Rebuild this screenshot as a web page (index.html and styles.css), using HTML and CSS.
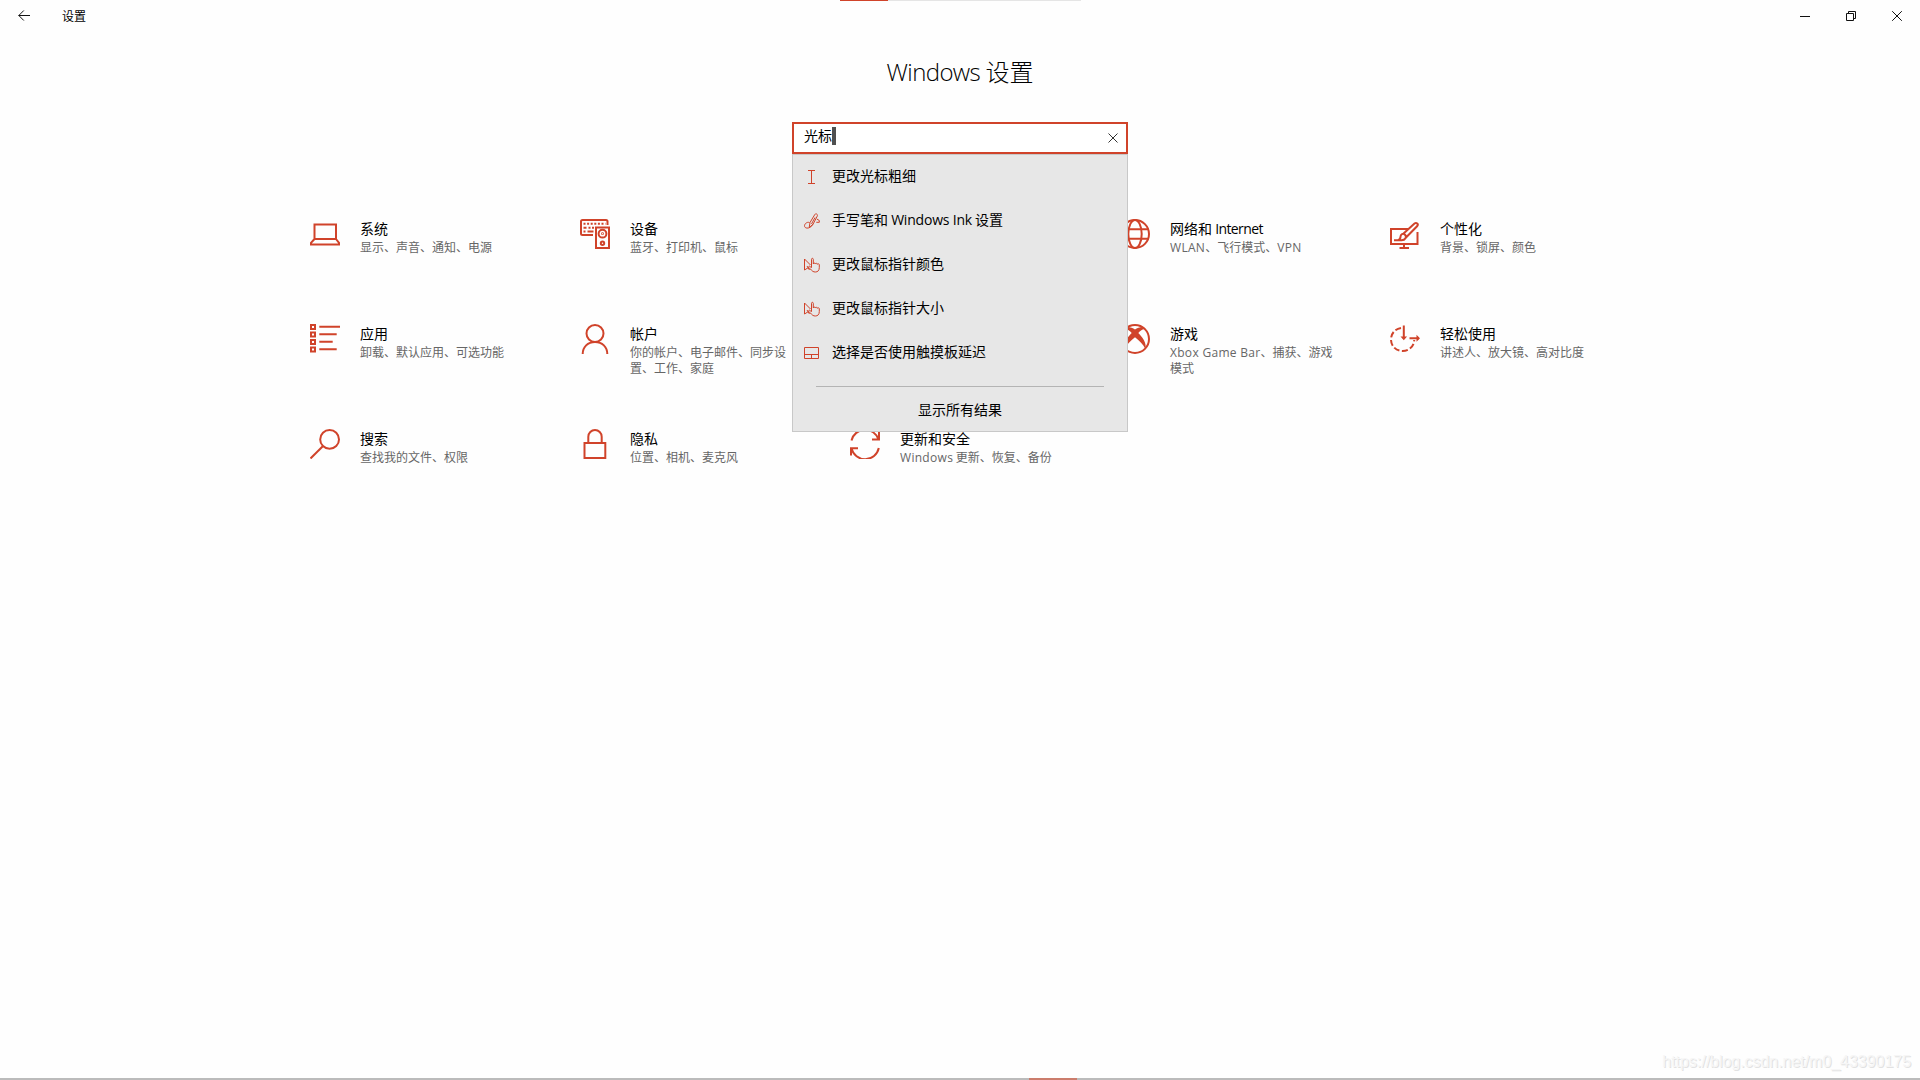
FILE: index.html
```html
<!DOCTYPE html>
<html lang="zh-CN">
<head>
  <meta charset="UTF-8">
  <meta name="viewport" content="width=device-width, initial-scale=1.0">
  <title>设置</title>
  <link rel="stylesheet" href="styles.css">
</head>
<body>
  <div class="top-strip"></div>
  <header class="titlebar">
    <svg class="back" viewBox="0 0 12 12"><path d="M.7 5.5H12M5.8.5l-5 5 5 5"/></svg>
    <span class="app-name">设置</span>
    <div class="window-buttons">
      <svg viewBox="0 0 10 10"><path d="M0 5.5h10"/></svg>
      <svg viewBox="0 0 10 10"><path d="M.5 2.5h7v7h-7zM2.5 2.5v-2h7v7h-2"/></svg>
      <svg viewBox="0 0 10 10"><path d="M.2.2l9.6 9.6M9.8.2L.2 9.8"/></svg>
    </div>
  </header>

  <main>
    <h1><span class="latin">Windows</span> 设置</h1>

    <div class="search">
      <div class="search-box">
        <span class="query">光标</span><span class="caret"></span>
        <svg class="clear" viewBox="0 0 10 10"><path d="M.5.5l9 9M9.5.5l-9 9"/></svg>
      </div>
      <div class="suggestions">
        <ul>
          <li>
            <svg viewBox="0 0 16 16"><path d="M4 1.500h7M4 14.500h7M7.500 1.500v13"/></svg>
            <span>更改光标粗细</span>
          </li>
          <li>
            <svg viewBox="0 0 16 16"><path d="M5.200 14.500L6 9.500 10.800 1.500c1-1.500 3.200-.3 2.500 1.500L9 11.300zM11 4.500L7.500 11M12.800 6l2.500 1.500v1.800h-3M5.500 9.500C2.500 8.500 0 11.500.6 13.500c.6 2 3.600 2 5.400.8 1.500-1 2.500-2 3-3.300"/></svg>
            <span>手写笔和 <span class="latin">Windows Ink</span> 设置</span>
          </li>
          <li>
            <svg viewBox="0 0 16 16"><use href="#pointer"/></svg>
            <span>更改鼠标指针颜色</span>
          </li>
          <li>
            <svg viewBox="0 0 16 16"><use href="#pointer"/></svg>
            <span>更改鼠标指针大小</span>
          </li>
          <li>
            <svg viewBox="0 0 16 16"><path d="M.5 2.500h14v11h-14zM.5 9.500h14M7.500 9.500v4"/></svg>
            <span>选择是否使用触摸板延迟</span>
          </li>
        </ul>
        <div class="show-all">显示所有结果</div>
      </div>
    </div>

    <div class="categories">
      <div class="category">
        <svg viewBox="0 0 30 30"><path d="M4.500 5.500h21.500v14.500h-21.500zM4.500 20L1 23.800v1.700h28v-1.700L26 20"/></svg>
        <div><h2>系统</h2><p>显示、声音、通知、电源</p></div>
      </div>
      <div class="category">
        <svg viewBox="0 0 30 30">
          <path d="M13 16H2.500Q1 16 1 14.500V2.500Q1 1 2.500 1h23.500q1.500 0 1.500 1.500V6M16 8.500h13v20.500H16z"/>
          <path stroke-dasharray="2 1.600" d="M3.500 4.700h22"/>
          <path d="M3.500 8.700h3M8.500 8.700h2M12 8.700h2M3.500 12.600h2M7.500 12.600h6"/>
          <circle cx="22.500" cy="14.700" r="3.900"/><circle cx="22.500" cy="14.700" r=".4"/><circle cx="22.500" cy="24.300" r="1.700"/>
        </svg>
        <div><h2>设备</h2><p>蓝牙、打印机、鼠标</p></div>
      </div>
      <div class="category"></div>
      <div class="category">
        <svg viewBox="0 0 30 30"><circle cx="15" cy="15" r="14"/><ellipse cx="15" cy="15" rx="6.700" ry="14"/><path d="M1.500 10.300h27M1.500 19.700h27"/></svg>
        <div><h2>网络和 <span class="latin">Internet</span></h2><p><span class="latin">WLAN</span>、飞行模式、<span class="latin">VPN</span></p></div>
      </div>
      <div class="category">
        <svg viewBox="0 0 30 30"><path d="M19 10H1v15h26.500V13M14 25.500V29M9.500 29h9.500M4 21.300h7.500c4 0 5.500-3.500 3.500-5.500s-4.500-.5-4.500 2c0 1.500-1 3-2.500 3.500M13 15L24.500 4.500c2-1.500 4.300.5 2.800 2.500L16 18.500"/></svg>
        <div><h2>个性化</h2><p>背景、锁屏、颜色</p></div>
      </div>
      <div class="category">
        <svg viewBox="0 0 30 30"><path d="M1 1h4v4H1zM1 8.400h4v4H1zM1 15.900h4v4H1zM1 23.400h4v4H1zM9.300 2.700H30M9.300 10.300h17.400M9.300 17.700h13.400M9.300 25.300h17.400"/></svg>
        <div><h2>应用</h2><p>卸载、默认应用、可选功能</p></div>
      </div>
      <div class="category">
        <svg viewBox="0 0 30 30"><circle cx="15" cy="9.500" r="8.500"/><path d="M2.700 30c0-7 5-12 12.300-12s12.300 5 12.300 12"/></svg>
        <div><h2>帐户</h2><p>你的帐户、电子邮件、同步设置、工作、家庭</p></div>
      </div>
      <div class="category"></div>
      <div class="category">
        <svg viewBox="0 0 30 30"><circle cx="15" cy="15" r="14"/><path class="solid" d="M6 3.300C9 2.500 12.500 4 15 5.500 17.500 4 21 2.500 24 3.300L25.500 5C23 4.700 20 7 18.300 9 22 12.500 27 19 25.500 25 23 20 19 16.500 15 13.200 11 16.500 7 20 4.500 25 3 19 8 12.500 11.700 9 10 7 7 4.700 4.500 5z"/></svg>
        <div><h2>游戏</h2><p><span class="latin">Xbox Game Bar</span>、捕获、游戏模式</p></div>
      </div>
      <div class="category">
        <svg viewBox="0 0 30 30"><path stroke-dasharray="6 2.500" d="M11 4C4 5.200 1 10.500 1 15.500c0 6.500 5 11.500 11.600 11.500s11.600-5 11.600-11"/><path d="M13.800 1.500V15M19.500 14.300H29"/><path class="solid" d="M10.500 12.500h6.600l-3.300 3.800zM26.500 10.800l3.500 3.500-3.500 3.500z"/></svg>
        <div><h2>轻松使用</h2><p>讲述人、放大镜、高对比度</p></div>
      </div>
      <div class="category">
        <svg viewBox="0 0 30 30"><circle cx="19.600" cy="10.400" r="9.400"/><path d="M12.800 17.200L.5 29.500"/></svg>
        <div><h2>搜索</h2><p>查找我的文件、权限</p></div>
      </div>
      <div class="category">
        <svg viewBox="0 0 30 30"><path d="M4.500 14h20.800v15H4.500zM8.300 14V7.700a6.700 6.700 0 0 1 13.400 0V14"/></svg>
        <div><h2>隐私</h2><p>位置、相机、麦克风</p></div>
      </div>
      <div class="category">
        <svg viewBox="0 0 30 30"><path d="M1.500 11.500A14 14 0 0 1 28.500 10.500M29 3v7.500H22M28.800 19A14 14 0 0 1 1.500 19.500M1 26.500v-7.200H8"/></svg>
        <div><h2>更新和安全</h2><p><span class="latin">Windows</span> 更新、恢复、备份</p></div>
      </div>
    </div>
  </main>

  <div class="watermark">https://blog.csdn.net/m0_43390175</div>
  <div class="bottom-strip"></div>

  <svg class="defs">
    <symbol id="pointer" viewBox="0 0 16 16"><path d="M4.500 10.500L.5 13V2l6 6M3 9l2.500 4M7.500 10.500V2.300c0-1.300 1.800-1.300 1.800 0V7c0-1.200 2-1.200 2 0 0-1 2-1 2 .3 0-.8 2-.8 2 .5V10.500c0 3-1.500 4.500-4 4.500-2 0-3-1-4-2L4.800 10.500c-.7-1 .7-1.800 1.500-1l1.200 1.500"/></symbol>
  </svg>
</body>
</html>
```
FILE: styles.css
```css
* {
  margin: 0;
  padding: 0;
  box-sizing: border-box;
}
body {
  position: relative;
  height: 1080px;
  overflow: hidden;
  background: #fefefe;
  color: #000;
  font-family: "Noto Sans CJK SC", sans-serif;
  font-size: 14px;
}
.latin {
  font-family: "Open Sans", sans-serif;
  line-height: 1;
  letter-spacing: -0.2px;
}
svg {
  display: block;
  flex: none;
  fill: none;
  stroke: #d0432a;
}
.defs {
  width: 0;
  height: 0;
}

/* Title bar */
.titlebar {
  display: flex;
  align-items: center;
  height: 32px;
  padding: 0 18px;
}
.titlebar svg {
  width: 10px;
  height: 10px;
  stroke: #111;
}
.titlebar .back {
  width: 12px;
  height: 12px;
}
.app-name {
  margin: -1px 0 0 32px;
  font-size: 12px;
}
.window-buttons {
  display: flex;
  gap: 36px;
  margin-left: auto;
}

/* Heading and search */
h1 {
  margin-top: 21px;
  height: 69px;
  line-height: 36px;
  font-size: 24px;
  font-weight: 300;
  text-align: center;
}
h1 .latin {
  letter-spacing: -0.6px;
}
.search {
  position: relative;
  width: 336px;
  margin: 0 auto;
}
.search-box {
  display: flex;
  align-items: center;
  height: 32px;
  padding: 0 8px 0 10px;
  border: 2px solid #d0432a;
  background: #fff;
}
.query {
  margin-top: -6px;
}
.caret {
  width: 4px;
  height: 18px;
  margin-top: -4px;
  background: #505050;
}
.clear {
  width: 10px;
  height: 10px;
  margin-left: auto;
  stroke: #333;
}
.suggestions {
  position: absolute;
  top: 32px;
  left: 0;
  width: 100%;
  height: 278px;
  border: 1px solid #c8c8c8;
  background: #e7e7e7;
}
.suggestions li {
  display: flex;
  align-items: center;
  gap: 12px;
  height: 44px;
  padding: 0 0 4px 11px;
  list-style: none;
}
.suggestions li svg {
  width: 16px;
  height: 16px;
  margin-top: 4px;
}
.show-all {
  margin: 11px 23px 0;
  border-top: 1px solid #b4b4b4;
  line-height: 44px;
  text-align: center;
}

/* Category grid */
.categories {
  display: grid;
  grid-template-columns: repeat(5, 270px);
  grid-auto-rows: 105px;
  width: 1350px;
  margin: 65px 0 0 310px;
}
.category {
  display: flex;
  gap: 20px;
}
.category svg {
  width: 30px;
  height: 30px;
  stroke-width: 2;
}
.category .solid {
  fill: #d0432a;
  stroke: none;
}
.category div {
  width: 163px;
}
.category h2 {
  height: 20px;
  line-height: 18px;
  font-size: 14px;
  font-weight: 400;
}
.category h2 .latin {
  letter-spacing: -0.6px;
}
.category p {
  line-height: 16px;
  font-size: 12px;
  color: #666;
}
.category p .latin {
  letter-spacing: 0.3px;
}

/* Screen edges */
.top-strip {
  position: absolute;
  top: 0;
  left: 840px;
  width: 241px;
  height: 1px;
  background: linear-gradient(to right, #d0432a 48px, #e5e5e5 48px);
}
.bottom-strip {
  position: absolute;
  bottom: 0;
  left: 0;
  width: 100%;
  height: 2px;
  background: linear-gradient(to right, #bbb 1029px, #cb7c6c 1029px, #cb7c6c 1077px, #bbb 1077px);
}
.watermark {
  position: absolute;
  right: 9px;
  bottom: 8px;
  font-family: "Liberation Sans", sans-serif;
  font-size: 16px;
  line-height: 20px;
  letter-spacing: -0.04px;
  color: #f6f6f6;
  text-shadow: 1px 1px 0 #e2e2e2;
}
```
